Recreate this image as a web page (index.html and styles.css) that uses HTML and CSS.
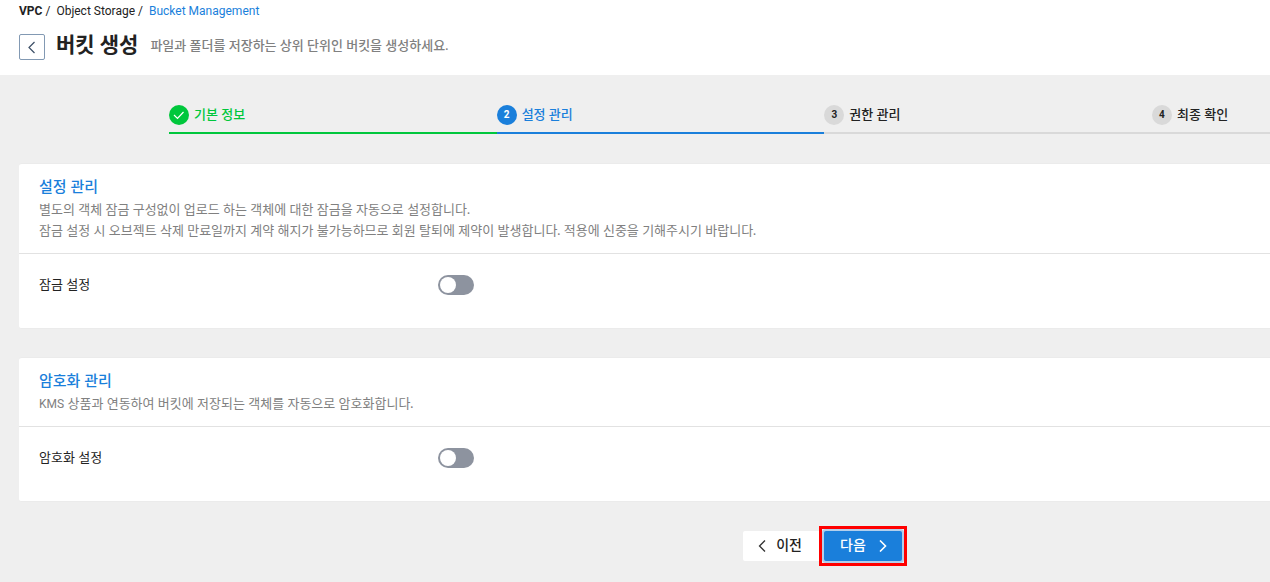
FILE: index.html
```html
<!DOCTYPE html>
<html lang="ko">
<head>
<meta charset="utf-8">
<meta name="viewport" content="width=device-width, initial-scale=1">
<title>버킷 생성</title>
<link rel="stylesheet" href="styles.css">
</head>
<body>
<header class="page-header">
  <nav class="breadcrumb" aria-label="breadcrumb">
    <span class="crumb crumb-root">VPC</span><span class="crumb-sep">/</span>
    <span class="crumb">Object Storage</span><span class="crumb-sep">/</span>
    <a class="crumb crumb-current" href="#">Bucket Management</a>
  </nav>
  <div class="title-row">
    <button class="back-button" type="button" aria-label="뒤로">
      <svg width="24" height="24" viewBox="0 0 24 24" fill="none" stroke="#3c4f66" stroke-width="1.2"><path d="M14.500 7 9 12.500l5.500 5.500"/></svg>
    </button>
    <h1 class="page-title">버킷 생성</h1>
    <p class="page-subtitle">파일과 폴더를 저장하는 상위 단위인 버킷을 생성하세요.</p>
  </div>
</header>
<main class="content">
  <ol class="steps">
    <li class="step step-done">
      <span class="step-badge"><svg width="20" height="20" viewBox="0 0 20 20" fill="none" stroke="#fff" stroke-width="1.2"><path d="m5 10 3.500 3.500L14.500 7"/></svg></span>
      <span class="step-label">기본 정보</span>
    </li>
    <li class="step step-active"><span class="step-badge">2</span><span class="step-label">설정 관리</span></li>
    <li class="step"><span class="step-badge">3</span><span class="step-label">권한 관리</span></li>
    <li class="step"><span class="step-badge">4</span><span class="step-label">최종 확인</span></li>
  </ol>
  <section class="panel">
    <div class="panel-head">
      <h2 class="panel-title">설정 관리</h2>
      <p class="panel-text">별도의 객체 잠금 구성없이 업로드 하는 객체에 대한 잠금을 자동으로 설정합니다.<br>잠금 설정 시 오브젝트 삭제 만료일까지 계약 해지가 불가능하므로 회원 탈퇴에 제약이 발생합니다. 적용에 신중을 기해주시기 바랍니다.</p>
    </div>
    <div class="panel-row">
      <label class="field-label" for="lock">잠금 설정</label>
      <input class="toggle" id="lock" type="checkbox" role="switch">
    </div>
  </section>
  <section class="panel">
    <div class="panel-head">
      <h2 class="panel-title">암호화 관리</h2>
      <p class="panel-text"><span class="latin">KMS</span> 상품과 연동하여 버킷에 저장되는 객체를 자동으로 암호화합니다.</p>
    </div>
    <div class="panel-row">
      <label class="field-label" for="encrypt">암호화 설정</label>
      <input class="toggle" id="encrypt" type="checkbox" role="switch">
    </div>
  </section>
  <div class="actions">
    <button class="button button-prev" type="button">
      <svg width="8" height="12" viewBox="0 0 8 12" fill="none" stroke="#333" stroke-width="1.3"><path d="M7 .5 1.500 6 7 11.500"/></svg>
      <span class="button-text">이전</span>
    </button>
    <div class="highlight">
      <button class="button button-next" type="button">
        <span class="button-text">다음</span>
        <svg width="8" height="12" viewBox="0 0 8 12" fill="none" stroke="#fff" stroke-width="1.6"><path d="M1 .5 6.500 6 1 11.500"/></svg>
      </button>
    </div>
  </div>
</main>
</body>
</html>
```
FILE: styles.css
```css
* {
  box-sizing: border-box;
}

body {
  margin: 0;
  background: #efefef;
  color: #222;
  font-family: Lato, "Noto Sans CJK KR", sans-serif;
  font-size: 13px;
  line-height: 20px;
}

h1, h2, p, ol {
  margin: 0;
  padding: 0;
}

button, input {
  margin: 0;
  font: inherit;
}

svg {
  display: block;
}

.page-header {
  background: #fff;
  padding: 1px 19px 15px;
}

.breadcrumb {
  display: flex;
  font-family: Roboto, sans-serif;
  font-size: 12px;
}

.crumb-root {
  font-weight: 700;
}

.crumb-sep {
  margin: 0 6px 0 3px;
}

.crumb-current {
  color: #1a7fdb;
  text-decoration: none;
}

.title-row {
  display: flex;
  align-items: center;
  padding-top: 9px;
  height: 39px;
}

.back-button {
  width: 26px;
  height: 26px;
  padding: 0;
  margin-top: 4px;
  background: #fff;
  border: 1px solid #8299b3;
  border-radius: 2px;
}

.page-title {
  margin-left: 11px;
  padding-bottom: 2px;
  font-size: 21px;
  line-height: 28px;
  font-weight: 700;
}

.page-subtitle {
  margin-left: 12px;
  color: #808080;
  font-weight: 500;
}

.content {
  padding: 30px 0 16px 19px;
}

.steps {
  display: grid;
  grid-template-columns: repeat(3, 1fr) 118px;
  margin-left: 150px;
  list-style: none;
}

.step {
  display: flex;
  align-items: center;
  gap: 5px;
  padding-bottom: 7px;
  border-bottom: 2px solid #d9d9d9;
  font-weight: 500;
}

.step-label,
.field-label,
.button-text {
  padding-bottom: 2px;
  line-height: 18px;
}

.step-badge {
  width: 20px;
  height: 20px;
  border-radius: 50%;
  background: #d9d9d9;
  font-family: Roboto, sans-serif;
  font-size: 10px;
  font-weight: 700;
  text-align: center;
}

.step-done {
  color: #00c73c;
  border-color: #00c73c;
}

.step-done .step-badge {
  background: #00c73c;
}

.step-active {
  color: #1a7fdb;
  border-color: #1a7fdb;
}

.step-active .step-badge {
  background: #1a7fdb;
  color: #fff;
}

.panel {
  margin-top: 28px;
  background: #fff;
  border: solid #ebebeb;
  border-width: 1px 0;
  border-radius: 3px 0 0 3px;
}

.steps + .panel {
  margin-top: 29px;
}

.panel-head {
  padding: 11px 20px 12px;
  border-bottom: 1px solid #e2e2e2;
}

.panel-title {
  margin-bottom: 2px;
  color: #1a7fdb;
  font-size: 15px;
  line-height: 22px;
  font-weight: 500;
}

.panel-text {
  color: #808080;
  line-height: 21px;
}

.latin {
  font-family: Roboto, sans-serif;
  font-size: 12px;
  line-height: 1;
}

.panel-row {
  display: grid;
  grid-template-columns: 399px 1fr;
  align-items: center;
  padding: 21px 20px 33px;
}

.toggle {
  appearance: none;
  width: 36px;
  height: 20px;
  padding: 2px;
  border-radius: 10px;
  background: #8d939f;
}

.toggle::before {
  content: "";
  display: block;
  width: 16px;
  height: 16px;
  border-radius: 50%;
  background: #fff;
}

.toggle:checked {
  background: #1a7fdb;
}

.toggle:checked::before {
  margin-left: auto;
}

.actions {
  display: flex;
  justify-content: center;
  align-items: center;
  margin-top: 24px;
  padding-left: 361px;
}

.button {
  display: flex;
  align-items: center;
  height: 30px;
  border: 0;
  font-size: 14px;
  font-weight: 500;
}

.button-prev {
  gap: 10px;
  padding: 0 17px 0 15px;
  background: #fff;
  color: #222;
  border-radius: 2px 0 0 2px;
}

.button-next {
  gap: 13px;
  padding: 0 15px 0 16px;
  background: #1a7fdb;
  color: #fff;
  border-radius: 2px;
  box-shadow: 0 0 0 2px #b3cfec;
}

.highlight {
  padding: 2px;
  border: 3px solid #f00;
}
```
